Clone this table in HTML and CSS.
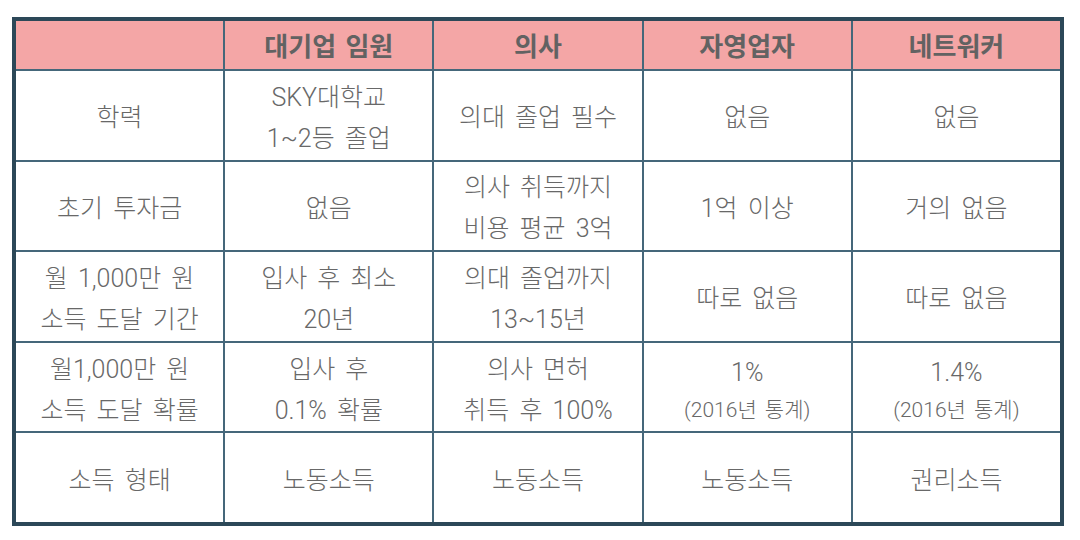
FILE: index.html
```html
<!DOCTYPE html>
<html lang="ko">
<head>
<meta charset="utf-8">
<link rel="stylesheet" href="styles.css">
</head>
<body>
<div class="table">
  <div class="cell head"></div>
  <div class="cell head"><span>대기업 임원</span></div>
  <div class="cell head"><span>의사</span></div>
  <div class="cell head"><span>자영업자</span></div>
  <div class="cell head"><span>네트워커</span></div>

  <div class="cell"><span>학력</span></div>
  <div class="cell"><span>SKY대학교</span><span>1~2등 졸업</span></div>
  <div class="cell"><span>의대 졸업 필수</span></div>
  <div class="cell"><span>없음</span></div>
  <div class="cell"><span>없음</span></div>

  <div class="cell"><span>초기 투자금</span></div>
  <div class="cell"><span>없음</span></div>
  <div class="cell"><span>의사 취득까지</span><span>비용 평균 3억</span></div>
  <div class="cell"><span>1억 이상</span></div>
  <div class="cell"><span>거의 없음</span></div>

  <div class="cell"><span>월 1,000만 원</span><span>소득 도달 기간</span></div>
  <div class="cell"><span>입사 후 최소</span><span>20년</span></div>
  <div class="cell"><span>의대 졸업까지</span><span>13~15년</span></div>
  <div class="cell"><span>따로 없음</span></div>
  <div class="cell"><span>따로 없음</span></div>

  <div class="cell"><span>월1,000만 원</span><span>소득 도달 확률</span></div>
  <div class="cell"><span>입사 후</span><span>0.1% 확률</span></div>
  <div class="cell"><span>의사 면허</span><span>취득 후 100%</span></div>
  <div class="cell"><span>1%</span><span class="small">(2016년 통계)</span></div>
  <div class="cell"><span>1.4%</span><span class="small">(2016년 통계)</span></div>

  <div class="cell"><span>소득 형태</span></div>
  <div class="cell"><span>노동소득</span></div>
  <div class="cell"><span>노동소득</span></div>
  <div class="cell"><span>노동소득</span></div>
  <div class="cell"><span>권리소득</span></div>
</div>
</body>
</html>
```

FILE: styles.css
```css
html, body {
  margin: 0;
  padding: 0;
  background: #ffffff;
}

body {
  padding: 17px 0 0 12px;
  font-family: Roboto, "Noto Sans CJK KR", sans-serif;
}

.table {
  box-sizing: border-box;
  width: 1052px;
  height: 509px;
  border: 4px solid #2c4858;
  background: #45677a;
  display: grid;
  grid-template-columns: repeat(5, 1fr);
  grid-template-rows: 48px repeat(5, 1fr);
  gap: 2px;
}

.cell {
  box-sizing: border-box;
  padding-top: 5px;
  background: #ffffff;
  display: flex;
  flex-direction: column;
  align-items: center;
  justify-content: center;
  text-align: center;
  color: #686868;
  font-size: 25px;
  font-weight: 300;
  line-height: 41px;
  word-spacing: 4px;
  white-space: nowrap;
}

.cell span {
  display: block;
}

.head {
  padding-top: 0;
  background: #f4a6a6;
  color: #626262;
  font-family: "Noto Sans CJK KR", sans-serif;
  font-weight: 700;
  font-size: 26px;
  line-height: 40px;
  word-spacing: 2px;
}

.cell .small {
  font-size: 21px;
  line-height: 34px;
  word-spacing: 3px;
}
```
